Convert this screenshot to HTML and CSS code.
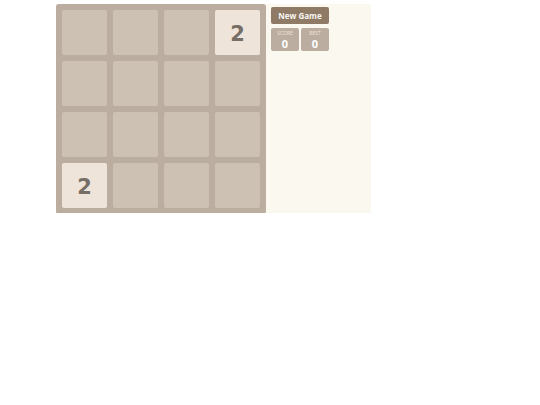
FILE: index.html
```html
<!DOCTYPE html>
<html>
<head>
<meta charset="utf-8">
<link rel="stylesheet" href="styles.css">
</head>
<body>
<div class="game">
  <div class="board">
    <div class="cell"></div>
    <div class="cell"></div>
    <div class="cell"></div>
    <div class="cell tile-2">2</div>
    <div class="cell"></div>
    <div class="cell"></div>
    <div class="cell"></div>
    <div class="cell"></div>
    <div class="cell"></div>
    <div class="cell"></div>
    <div class="cell"></div>
    <div class="cell"></div>
    <div class="cell tile-2">2</div>
    <div class="cell"></div>
    <div class="cell"></div>
    <div class="cell"></div>
  </div>
  <div class="side">
    <button class="new-game">New Game</button>
    <div class="scores">
      <div class="score-box"><div class="label">SCORE</div><div class="value">0</div></div>
      <div class="score-box"><div class="label">BEST</div><div class="value">0</div></div>
    </div>
  </div>
</div>
</body>
</html>
```
FILE: styles.css
```css
html, body {
  margin: 0;
  padding: 0;
  background: #ffffff;
  font-family: "Open Sans", "DejaVu Sans", sans-serif;
}
.game {
  display: flex;
  margin: 4px 0 0 56px;
  width: 315px;
  height: 209px;
  background: #faf8ef;
}
.board {
  box-sizing: border-box;
  width: 210px;
  height: 210px;
  padding: 6px;
  background: #bbada0;
  border-radius: 3px;
  display: grid;
  grid-template-columns: repeat(4, 45px);
  grid-template-rows: repeat(4, 45px);
  gap: 6px;
  flex-shrink: 0;
}
.cell {
  background: #cdc1b4;
  border-radius: 2px;
  display: flex;
  align-items: center;
  justify-content: center;
  font-family: "DejaVu Sans", sans-serif;
  font-weight: 700;
  font-size: 21px;
  color: #776e65;
  padding-top: 3px;
  box-sizing: border-box;
}
.tile-2 {
  background: #eee4da;
}
.side {
  display: flex;
  flex-direction: column;
  align-items: flex-start;
  gap: 4px;
  padding: 3px 0 0 5px;
}
.new-game {
  width: 58px;
  height: 17px;
  border: none;
  border-radius: 2px;
  background: #8f7a66;
  color: #f9f6f2;
  font-family: "Open Sans", "DejaVu Sans", sans-serif;
  font-weight: 700;
  font-size: 8px;
  padding: 0;
  margin: 0;
}
.scores {
  display: flex;
  gap: 2px;
}
.score-box {
  width: 28px;
  height: 23px;
  background: #bbada0;
  border-radius: 2px;
  display: flex;
  flex-direction: column;
  align-items: center;
  padding-top: 2px;
  box-sizing: border-box;
}
.label {
  font-size: 5px;
  line-height: 7px;
  color: #eee4da;
}
.value {
  font-size: 11px;
  line-height: 13px;
  font-weight: 700;
  color: #ffffff;
}
```
